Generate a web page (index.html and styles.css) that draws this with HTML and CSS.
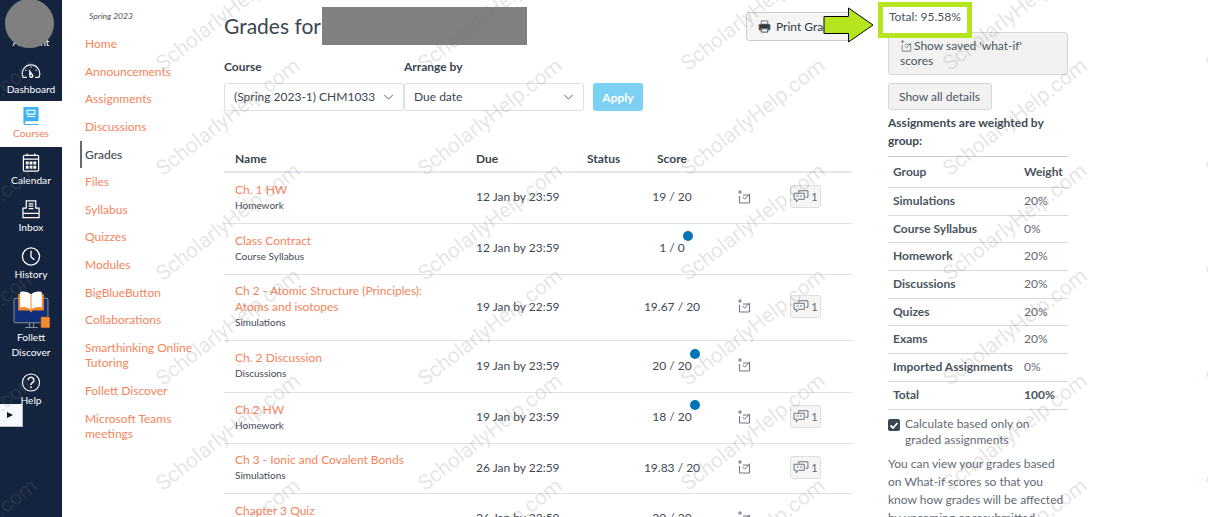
FILE: index.html
```html
<!DOCTYPE html>
<html lang="en">
<head>
<meta charset="utf-8">
<title>Grades</title>
<link rel="stylesheet" href="styles.css">
</head>
<body>
<div class="page">
  <nav class="global-nav">
    <a class="gn gn-account"><span class="avatar"></span><span class="gn-label">Account</span></a>
    <a class="gn gn-std gn-dash">
      <svg class="gi" viewBox="0 0 24 20"><g fill="none" stroke="#fff" stroke-width="1.3"><path d="M7 17H2.500A10.500 10.500 0 1 1 21.500 17H17"/><path d="M5 8l1.500 1M19 8l-1.500 1M12 4v1.600"/></g><path fill="#fff" d="M9.500 7l4.800 6.500a2.600 2.600 0 1 1-4.500 2.200z"/><circle cx="12" cy="15" r="1" fill="#14243f"/></svg>
      <span class="gn-label">Dashboard</span></a>
    <a class="gn gn-std gn-active">
      <svg class="gi" viewBox="0 0 20 20"><path fill="#3fb4ef" d="M2 1h15a1 1 0 0 1 1 1v14H5a1.5 1.5 0 0 0 0 3h13v1H4a2 2 0 0 1-2-2z"/><path fill="none" stroke="#fff" stroke-width="1.2" d="M6 4.5h8v4H6zM6 11h8"/></svg>
      <span class="gn-label">Courses</span></a>
    <a class="gn gn-std">
      <svg class="gi" viewBox="0 0 20 20"><g fill="none" stroke="#fff" stroke-width="1.3"><rect x="2" y="2.5" width="16" height="16.5" rx="1"/><path d="M2 6.5h16M6 .5v3M14 .5v3"/></g><path fill="#fff" d="M4.5 9h3v3h-3zM8.5 9h3v3h-3zM12.500 9h3v3h-3zM4.500 13.500h3v3h-3zM8.500 13.500h3v3h-3zM12.500 13.500h3v3h-3z"/></svg>
      <span class="gn-label">Calendar</span></a>
    <a class="gn gn-std">
      <svg class="gi" viewBox="0 0 20 20"><g fill="none" stroke="#fff" stroke-width="1.3"><path d="M5 9V1h10v8"/><path d="M7.500 4h5M7.500 6.500h5M7.500 9h5"/><path d="M5 8.500H1.500v10h17v-10H15M1.500 14h17"/></g></svg>
      <span class="gn-label">Inbox</span></a>
    <a class="gn gn-std">
      <svg class="gi" viewBox="0 0 20 20"><g fill="none" stroke="#fff" stroke-width="1.4"><circle cx="10" cy="10" r="9"/><path d="M10 4v6.500l3.500 3"/></g></svg>
      <span class="gn-label">History</span></a>
    <a class="gn gn-follett">
      <svg class="gi-follett" viewBox="0 0 36 37"><rect x="1" y="7" width="33" height="24" rx="1.500" fill="none" stroke="#8792a3" stroke-width="1"/><rect x="2" y="8" width="31" height="22" fill="#10307d"/><path fill="none" stroke="#8792a3" d="M12 35.500h12M16 31v4M20 31v4"/><path fill="#f08a2c" d="M5 3h25v16H19l-1.500 2-1.500-2H5z"/><path fill="#fff" d="M7 1c4-1 8 0 10 2v15c-2-2-6-3-10-2zM28 1c-4-1-8 0-10 2v15c2-2 6-3 10-2z"/><rect x="27" y="25" width="9" height="11" rx="1" fill="#f58a35" stroke="#333" stroke-width=".5"/></svg>
      <span class="gn-label">Follett<br>Discover</span></a>
    <a class="gn gn-std gn-help">
      <svg class="gi" viewBox="0 0 20 20"><circle cx="10" cy="10" r="9" fill="none" stroke="#fff" stroke-width="1.2"/><path fill="none" stroke="#fff" stroke-width="1.6" d="M7 7.500a3 3 0 1 1 4.500 2.600c-1 .6-1.500 1-1.500 2.400"/><circle cx="10" cy="15" r="1" fill="#fff"/></svg>
      <span class="gn-label">Help</span></a>
    <button class="collapse" type="button" aria-label="Collapse"><span class="collapse-tri"></span></button>
  </nav>

  <nav class="course-nav">
    <div class="term">Spring 2023</div>
    <a class="cn">Home</a>
    <a class="cn">Announcements</a>
    <a class="cn">Assignments</a>
    <a class="cn">Discussions</a>
    <a class="cn cn-active">Grades</a>
    <a class="cn">Files</a>
    <a class="cn">Syllabus</a>
    <a class="cn">Quizzes</a>
    <a class="cn">Modules</a>
    <a class="cn">BigBlueButton</a>
    <a class="cn">Collaborations</a>
    <a class="cn">Smarthinking Online Tutoring</a>
    <a class="cn">Follett Discover</a>
    <a class="cn">Microsoft Teams meetings</a>
  </nav>

  <main class="main">
    <div class="head">
      <h1 class="title"><span class="title-t">Grades for</span><span class="redact"></span></h1>
      <button class="btn btn-print" type="button">
        <svg class="print-ic" viewBox="0 0 14 14"><path fill="#fff" stroke="#5f6b75" d="M3.500 1h7v3.500h-7z"/><path fill="#2d3b45" d="M1 4.500h12V11h-2V9H3v2H1z"/><path fill="#fff" stroke="#2d3b45" d="M3.500 9.500h7V13h-7z"/><path fill="#e8793a" d="M.5 5h1v5h-1z"/><path fill="#4a90c2" d="M12.500 5h1v5h-1z"/></svg>
        Print Grades
      </button>
    </div>
    <div class="filters">
      <div class="filter"><label class="flabel">Course</label>
        <div class="select">(Spring 2023-1) CHM1033<svg class="chev" viewBox="0 0 12 7"><path d="M1 1l5 5 5-5" fill="none" stroke="#444" stroke-width="1"/></svg></div></div>
      <div class="filter"><label class="flabel">Arrange by</label>
        <div class="select select-b">Due date<svg class="chev" viewBox="0 0 12 7"><path d="M1 1l5 5 5-5" fill="none" stroke="#444" stroke-width="1"/></svg></div></div>
      <button class="apply" type="button">Apply</button>
    </div>

    <table class="grades">
      <thead><tr><th class="c-name">Name</th><th class="c-due">Due</th><th class="c-status">Status</th><th class="c-score">Score</th><th class="c-ic"></th><th class="c-btn"></th></tr></thead>
      <tbody>
        <tr class="r51"><td class="c-name"><a class="alink">Ch. 1 HW</a><div class="sub">Homework</div></td><td class="c-due">12 Jan by 23:59</td><td></td><td class="c-score"><span class="sc">19 / 20</span></td><td class="c-ic"><svg class="wi"><use href="#whatif"/></svg></td><td><span class="cbtn"><svg class="ci"><use href="#cmt"/></svg>1</span></td></tr>
        <tr class="r51"><td class="c-name"><a class="alink">Class Contract</a><div class="sub">Course Syllabus</div></td><td class="c-due">12 Jan by 23:59</td><td></td><td class="c-score"><span class="sc">1 / 0<i class="dot"></i></span></td><td></td><td></td></tr>
        <tr class="r66"><td class="c-name"><a class="alink">Ch 2 - Atomic Structure (Principles):<br>Atoms and isotopes</a><div class="sub">Simulations</div></td><td class="c-due">19 Jan by 22:59</td><td></td><td class="c-score"><span class="sc">19.67 / 20</span></td><td class="c-ic"><svg class="wi"><use href="#whatif"/></svg></td><td><span class="cbtn"><svg class="ci"><use href="#cmt"/></svg>1</span></td></tr>
        <tr class="r52"><td class="c-name"><a class="alink">Ch. 2 Discussion</a><div class="sub">Discussions</div></td><td class="c-due">19 Jan by 23:59</td><td></td><td class="c-score"><span class="sc">20 / 20<i class="dot"></i></span></td><td class="c-ic"><svg class="wi"><use href="#whatif"/></svg></td><td></td></tr>
        <tr class="r51"><td class="c-name"><a class="alink">Ch.2 HW</a><div class="sub">Homework</div></td><td class="c-due">19 Jan by 23:59</td><td></td><td class="c-score"><span class="sc">18 / 20<i class="dot"></i></span></td><td class="c-ic"><svg class="wi"><use href="#whatif"/></svg></td><td><span class="cbtn"><svg class="ci"><use href="#cmt"/></svg>1</span></td></tr>
        <tr class="r50"><td class="c-name"><a class="alink">Ch 3 - Ionic and Covalent Bonds</a><div class="sub">Simulations</div></td><td class="c-due">26 Jan by 22:59</td><td></td><td class="c-score"><span class="sc">19.83 / 20</span></td><td class="c-ic"><svg class="wi"><use href="#whatif"/></svg></td><td><span class="cbtn"><svg class="ci"><use href="#cmt"/></svg>1</span></td></tr>
        <tr class="r51"><td class="c-name"><a class="alink">Chapter 3 Quiz</a><div class="sub">Quizes</div></td><td class="c-due">26 Jan by 23:59</td><td></td><td class="c-score"><span class="sc">20 / 20</span></td><td class="c-ic"><svg class="wi"><use href="#whatif"/></svg></td><td></td></tr>
      </tbody>
    </table>
  </main>

  <aside class="side">
    <div class="total">Total: 95.58%</div>
    <button class="btn btn-wide" type="button"><svg class="wi wi-in"><use href="#whatif"/></svg>Show saved 'what-if' scores</button>
    <button class="btn btn-details" type="button">Show all details</button>
    <p class="weighted">Assignments are weighted by group:</p>
    <table class="weights">
      <thead><tr><th>Group</th><th class="w-col">Weight</th></tr></thead>
      <tbody>
        <tr><th>Simulations</th><td class="w-col">20%</td></tr>
        <tr><th>Course Syllabus</th><td class="w-col">0%</td></tr>
        <tr><th>Homework</th><td class="w-col">20%</td></tr>
        <tr><th>Discussions</th><td class="w-col">20%</td></tr>
        <tr><th>Quizes</th><td class="w-col">20%</td></tr>
        <tr><th>Exams</th><td class="w-col">20%</td></tr>
        <tr><th>Imported Assignments</th><td class="w-col">0%</td></tr>
        <tr><th>Total</th><th class="w-col">100%</th></tr>
      </tbody>
    </table>
    <div class="check"><span class="cb"><svg viewBox="0 0 12 12"><path d="M2.500 6.500l2.500 2.500 4.500-5" fill="none" stroke="#fff" stroke-width="1.800"/></svg></span><span>Calculate based only on graded assignments</span></div>
    <p class="para">You can view your grades based on What-if scores so that you know how grades will be affected by upcoming or resubmitted assignments.</p>
  </aside>

  <svg class="arrow" viewBox="0 0 51 36"><path d="M1 9.500h24.500V1L50 18 25.500 35v-8.500H1z" fill="#b5e61d" stroke="#000" stroke-width="1"/></svg>

  <div class="watermarks" aria-hidden="true">
    <span>ScholarlyHelp.com</span><span>ScholarlyHelp.com</span><span>ScholarlyHelp.com</span><span>ScholarlyHelp.com</span><span>ScholarlyHelp.com</span><span>ScholarlyHelp.com</span>
    <span>ScholarlyHelp.com</span><span>ScholarlyHelp.com</span><span>ScholarlyHelp.com</span><span>ScholarlyHelp.com</span><span>ScholarlyHelp.com</span><span>ScholarlyHelp.com</span>
    <span>ScholarlyHelp.com</span><span>ScholarlyHelp.com</span><span>ScholarlyHelp.com</span><span>ScholarlyHelp.com</span><span>ScholarlyHelp.com</span><span>ScholarlyHelp.com</span>
    <span>ScholarlyHelp.com</span><span>ScholarlyHelp.com</span><span>ScholarlyHelp.com</span><span>ScholarlyHelp.com</span><span>ScholarlyHelp.com</span><span>ScholarlyHelp.com</span>
    <span>ScholarlyHelp.com</span><span>ScholarlyHelp.com</span><span>ScholarlyHelp.com</span><span>ScholarlyHelp.com</span><span>ScholarlyHelp.com</span><span>ScholarlyHelp.com</span>
    <span>ScholarlyHelp.com</span><span>ScholarlyHelp.com</span><span>ScholarlyHelp.com</span><span>ScholarlyHelp.com</span><span>ScholarlyHelp.com</span><span>ScholarlyHelp.com</span>
  </div>
</div>

<svg class="defs" aria-hidden="true">
  <symbol id="whatif" viewBox="0 0 14 14"><g fill="none" stroke="#6b7780" stroke-width="1"><path d="M3 0v4M1 2h4M2.500 6v7h10V5H6"/><path d="M5.500 7l2.200 2.200L13 3.500"/></g></symbol>
  <symbol id="cmt" viewBox="0 0 17 14"><g fill="none" stroke="#5f6b75" stroke-width="1"><path d="M6 3V.8h10v7h-2.500"/><path d="M1 3.500h11v6.500H6l-2.500 2.800V10H1z"/><path d="M4 6.500h2M7.500 6.500h2"/></g></symbol>
</svg>
</body>
</html>
```
FILE: styles.css
```css
* { box-sizing: border-box; }
html, body { margin: 0; padding: 0; height: 100%; overflow: hidden; background: #fff; }
body { font-family: Lato, "Liberation Sans", sans-serif; color: #2d3b45; font-size: 12px; }
.page { position: relative; display: flex; width: 1208px; height: 517px; overflow: hidden; }
.defs { display: none; }

/* global nav */
.global-nav { position: relative; flex: 0 0 62px; height: 517px; background: #14243f; color: #fff; display: flex; flex-direction: column; }
.gn { display: flex; flex-direction: column; align-items: center; color: #fff; }
.gn-label { font-size: 10.200px; line-height: 15px; text-align: center; }
.gn-account { position: relative; height: 54px; justify-content: flex-end; padding-bottom: 4px; }
.avatar { position: absolute; left: 5px; top: -1px; width: 49px; height: 49px; border-radius: 50%; background: #808080; }
.gn-std { height: 47px; padding-top: 6px; }
.gn-dash { padding-top: 8px; }
.gn-help { padding-top: 8px; }
.gi { width: 20px; height: 19px; margin-bottom: 1px; }
.gn-active { background: #fff; color: #f5845b; height: 46px; padding-top: 5px; }
.gn-follett { height: 77px; padding-top: 3px; }
.gi-follett { width: 37px; height: 38px; margin-bottom: 1px; }
.collapse { position: absolute; left: 0; top: 404px; width: 23px; height: 23px; padding: 0 0 0 7px; background: #f6f9fc; border: 0; border-right: 1px solid #bbb; border-bottom: 1px solid #bbb; display: flex; align-items: center; }
.collapse-tri { width: 0; height: 0; border-left: 6px solid #111; border-top: 3.500px solid transparent; border-bottom: 3.500px solid transparent; }

/* course nav */
.course-nav { flex: 0 0 162px; padding: 10px 10px 0 18px; display: flex; flex-direction: column; font-size: 12px; }
.term { font-size: 8.500px; font-style: italic; color: #555; line-height: 12px; padding-left: 9px; margin-bottom: 8.500px; }
.cn { display: block; padding: 5.800px 0 6.300px 3px; line-height: 15.500px; color: #f5845b; border-left: 2px solid transparent; }
.cn-active { color: #3f4a54; border-left-color: #5f6b75; font-weight: 500; }

/* main */
.main { flex: 0 0 628px; position: relative; }
.head { display: flex; justify-content: space-between; align-items: flex-start; height: 58px; padding-top: 7px; }
.title { margin: 0; font-size: 21px; font-weight: 400; line-height: 38px; color: #3a4650; display: flex; }
.title-t { display: block; width: 98px; white-space: nowrap; }
.redact { display: block; width: 205px; height: 38px; background: #808080; }
.btn { font: inherit; font-size: 12px; color: #2d3b45; background: #f5f5f5; border: 1px solid #c7cdd1; border-radius: 3px; text-align: left; }
.btn-print { width: 106px; height: 29px; margin-top: 5px; display: flex; align-items: center; gap: 5px; padding: 0 0 0 11px; white-space: nowrap; }
.print-ic { width: 13px; height: 13px; }
.filters { display: flex; align-items: flex-end; height: 53px; }
.filter { display: flex; flex-direction: column; }
.flabel { font-weight: 700; font-size: 12px; line-height: 18px; color: #3a4650; margin-bottom: 7px; }
.select { width: 180px; height: 28px; border: 1px solid #dde0e3; border-radius: 3px; padding: 0 9px; font-size: 12px; line-height: 26px; color: #3a4650; display: flex; justify-content: space-between; align-items: center; background: #fff; white-space: nowrap; }
.chev { width: 11px; height: 6px; flex: none; }
.apply { margin-left: 9px; width: 50px; height: 28px; background: #7bd0f4; color: #fff; border: 0; border-radius: 3px; font: inherit; font-size: 12px; font-weight: 700; }
.grades { margin-top: 33px; width: 628px; border-collapse: collapse; table-layout: fixed; font-size: 12px; }
.grades th { font-weight: 700; text-align: left; height: 28px; padding: 1px 0 0; color: #3a4650; border-bottom: 2px solid #e6e9eb; }
.grades td { padding: 0 0 2px; vertical-align: middle; border-bottom: 1px solid #dfe2e4; color: #3f4a54; }
.grades th.c-name, .grades td.c-name { width: 252px; padding-left: 11px; }
.c-due { width: 111px; }
.c-status { width: 40px; }
.grades th.c-score { width: 90px; padding-left: 30px; }
.c-ic { width: 73px; }
.r51 { height: 51px; }
.r66 { height: 66px; }
.r52 { height: 52px; }
.r50 { height: 50px; }
.alink { color: #f5845b; line-height: 16px; display: block; }
.sub { font-size: 10px; line-height: 14px; color: #3f4a54; }
.grades td.c-score { text-align: center; white-space: nowrap; }
.sc { position: relative; display: inline-block; }
.dot { position: absolute; right: -8px; top: -9px; width: 10px; height: 10px; border-radius: 50%; background: #0374b5; }
.wi { width: 14px; height: 14px; display: block; margin-left: 20px; }
.cbtn { display: inline-flex; align-items: center; gap: 2px; width: 31px; height: 23px; justify-content: center; font-size: 11px; background: #f5f5f5; border: 1px solid #dcdfe1; border-radius: 3px; color: #5f6b75; }
.ci { width: 16px; height: 13px; }

/* sidebar */
.side { flex: 0 0 180px; margin-left: 36px; position: relative; padding-top: 9px; font-size: 12px; color: #4a555e; }
.total { position: relative; z-index: 3; padding-left: 1px; line-height: 16px; height: 23px; color: #4a555e; }
.total::before { content: ""; box-sizing: border-box; position: absolute; z-index: -1; left: -10px; top: -7px; width: 94px; height: 36px; background: #fff; border: 5px solid #b5e61d; }
.btn-wide { display: block; width: 180px; height: 43px; padding: 3px 11px 5px; line-height: 15px; background: #f2f2f2; border-color: #d3d7da; color: #4a555e; }
.wi-in { display: inline-block; width: 12px; height: 12px; margin: 0 2px 0 0; vertical-align: -2px; }
.btn-details { display: block; width: 104px; height: 27px; margin-top: 8px; padding: 0 10px; white-space: nowrap; background: #f2f2f2; border-color: #d3d7da; color: #4a555e; }
.weighted { margin: 4px 0 6px; font-weight: 700; line-height: 18px; color: #3f4a54; }
.weights { width: 180px; border-collapse: collapse; border-top: 1px solid #c7cdd1; }
.weights th, .weights td { height: 27.700px; padding: 0 0 2px 5px; text-align: left; border-bottom: 1px solid #d4d8db; font-weight: 400; white-space: nowrap; }
.weights th { font-weight: 700; color: #4a555e; }
.weights td { color: #5f6b75; }
.weights thead th { height: 31px; }
.weights .w-col { width: 44px; padding-left: 0; }
.check { display: flex; gap: 3px; margin-top: 6px; line-height: 16px; color: #5f6b75; }
.cb { flex: none; width: 12px; height: 12px; margin: 3px 2px 0 0; border-radius: 2px; background: #3a4650; display: block; }
.cb svg { display: block; width: 12px; height: 12px; }
.para { margin: 7px 0 0; line-height: 18px; color: #5f6b75; }

/* overlays */
.arrow { position: absolute; left: 823px; top: 7px; width: 51px; height: 36px; z-index: 4; }
.watermarks { position: absolute; z-index: 5; left: -102px; top: -11px; display: grid; grid-template-columns: repeat(6, 262.500px); grid-auto-rows: 105px; pointer-events: none; }
.watermarks span { display: block; font: 400 21px Roboto, "Liberation Sans", sans-serif; color: rgba(120,120,120,.2); transform: rotate(-38deg); transform-origin: 50% 50%; white-space: nowrap; text-align: center; line-height: 30px; width: 180px; }
```
